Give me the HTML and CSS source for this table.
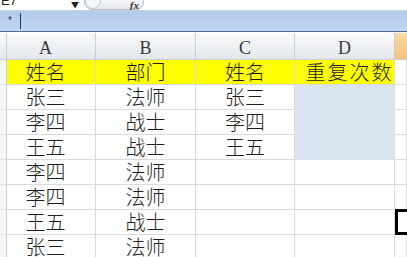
FILE: index.html
```html
<!DOCTYPE html>
<html lang="zh-CN">
  <head>
    <meta charset="UTF-8" />
    <meta name="viewport" content="width=device-width, initial-scale=1.0" />
    <title>重复次数</title>
    <link rel="stylesheet" href="styles.css">
  </head>
  <body>
    <!-- name box and function button -->
    <div class="namebar">
      <span class="cell-ref">E7</span>
      <span class="drop">&#9660;</span>
      <span class="fx-btn"><span class="knob"></span><i>fx</i></span>
    </div>

    <!-- formula bar -->
    <div class="formulabar">
      <span class="star">*</span>
      <span class="caret"></span>
    </div>

    <!-- worksheet -->
    <div class="sheet">
      <div class="corner"></div>
      <div class="col-head">A</div>
      <div class="col-head">B</div>
      <div class="col-head">C</div>
      <div class="col-head">D</div>
      <div class="col-head active-col"></div>

      <div class="row-head"></div>
      <div class="cell first yellow">姓名</div>
      <div class="cell yellow">部门</div>
      <div class="cell yellow">姓名</div>
      <div class="cell yellow wide">重复次数</div>
      <div class="cell"></div>

      <div class="row-head"></div>
      <div class="cell first">张三</div>
      <div class="cell">法师</div>
      <div class="cell">张三</div>
      <div class="cell blue"></div>
      <div class="cell"></div>

      <div class="row-head"></div>
      <div class="cell first">李四</div>
      <div class="cell">战士</div>
      <div class="cell">李四</div>
      <div class="cell blue"></div>
      <div class="cell"></div>

      <div class="row-head"></div>
      <div class="cell first">王五</div>
      <div class="cell">战士</div>
      <div class="cell">王五</div>
      <div class="cell blue"></div>
      <div class="cell"></div>

      <div class="row-head"></div>
      <div class="cell first">李四</div>
      <div class="cell">法师</div>
      <div class="cell"></div>
      <div class="cell"></div>
      <div class="cell"></div>

      <div class="row-head"></div>
      <div class="cell first">李四</div>
      <div class="cell">法师</div>
      <div class="cell"></div>
      <div class="cell"></div>
      <div class="cell"></div>

      <div class="row-head"></div>
      <div class="cell first">王五</div>
      <div class="cell">战士</div>
      <div class="cell"></div>
      <div class="cell"></div>
      <div class="cell selected"></div>

      <div class="row-head"></div>
      <div class="cell first">张三</div>
      <div class="cell">法师</div>
      <div class="cell"></div>
      <div class="cell"></div>
      <div class="cell"></div>
    </div>
  </body>
</html>
```

FILE: styles.css
```css
body {
  margin: 0;
  width: 407px;
  height: 257px;
  overflow: hidden;
  background-color: #fff;
  font-family: "Noto Sans CJK SC", sans-serif;
}
.namebar {
  position: relative;
  height: 10px;
  border-bottom: 1px solid #c9d3df;
  overflow: hidden;
}
.cell-ref {
  position: absolute;
  left: 1px;
  top: -6px;
  font-family: "Liberation Sans", sans-serif;
  font-size: 13px;
  line-height: 13px;
  color: #222;
}
.drop {
  position: absolute;
  left: 71px;
  top: 1px;
  font-size: 8px;
  line-height: 8px;
  color: #222;
}
.fx-btn {
  position: absolute;
  left: 84px;
  top: -8px;
  width: 58px;
  height: 16px;
  border: 1px solid #b9c0c9;
  border-radius: 8px;
  background: linear-gradient(#ffffff, #e6e9ee);
}
.knob {
  position: absolute;
  left: 0;
  top: 0;
  width: 14px;
  height: 14px;
  border: 1px solid #c2c8d0;
  border-radius: 50%;
  background: #f4f5f7;
}
.fx-btn i {
  position: absolute;
  right: 4px;
  top: 7px;
  font-family: "Liberation Serif", serif;
  font-size: 11px;
  line-height: 11px;
  font-weight: bold;
  color: #333;
}
.formulabar {
  display: flex;
  align-items: center;
  height: 20px;
  background: linear-gradient(#b3cbec, #c3d6f2);
  border-bottom: 1px solid #4f6e9e;
}
.star {
  width: 9px;
  margin-left: 8px;
  font-family: "Liberation Sans", sans-serif;
  font-size: 10px;
  line-height: 10px;
  color: #333;
}
.caret {
  width: 1px;
  height: 16px;
  margin-left: 3px;
  background-color: #223a6a;
}
.sheet {
  display: grid;
  grid-template-columns: 7px 89px 100px 99px 100px 12px;
  grid-template-rows: 27px repeat(8, 25px);
  margin-top: 1px;
}
.corner,
.col-head {
  background: linear-gradient(#f9fafb, #e3e7ec);
  border-right: 1px solid #c7cdd5;
  border-bottom: 1px solid #c7cdd5;
}
.col-head {
  display: flex;
  align-items: flex-end;
  justify-content: center;
  padding-bottom: 2px;
  font-family: "Liberation Serif", serif;
  font-size: 18px;
  line-height: 18px;
  color: #3a3a3a;
}
.col-head:nth-child(2) {
  padding-right: 11px;
}
.active-col {
  background: linear-gradient(#f9d9a4, #f4c27b);
  border-right: 0;
}
.row-head {
  background-color: #f4f6f9;
  border-right: 1px solid #c7cdd5;
  border-bottom: 1px solid #dfe3e8;
}
.cell {
  display: flex;
  align-items: center;
  justify-content: center;
  white-space: nowrap;
  border-right: 1px solid #dadada;
  border-bottom: 1px solid #dadada;
  font-size: 20px;
  line-height: 20px;
  font-weight: 300;
  color: #1c1c1c;
}
.cell.first {
  padding-right: 11px;
}
.cell.wide {
  padding-left: 10px;
  letter-spacing: 2px;
}
.cell.yellow {
  background-color: #ffff00;
}
.cell.blue {
  background-color: #dbe5f1;
  border-bottom-color: #dbe5f1;
}
.cell.selected {
  border: 3px solid #000;
  border-right: 0;
  margin-top: -1px;
}
```
